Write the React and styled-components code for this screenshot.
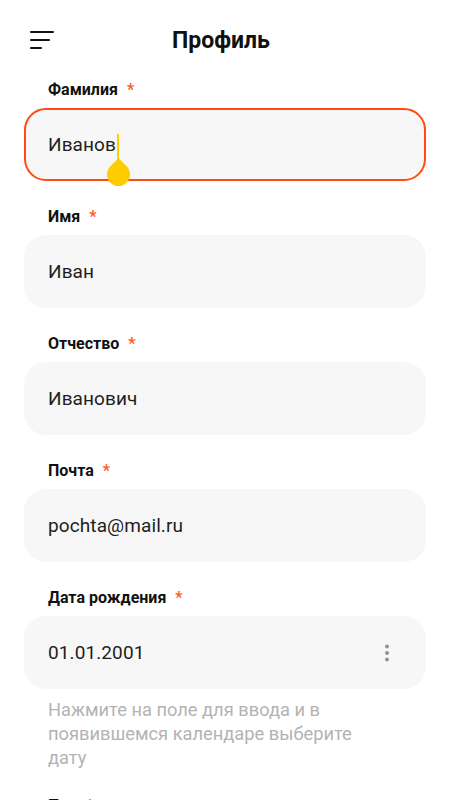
import React from 'react';
import styled, { createGlobalStyle } from 'styled-components';

const GlobalStyle = createGlobalStyle`
  html, body {
    margin: 0;
    padding: 0;
    background: #ffffff;
    font-family: Roboto, "Noto Sans", Arial, sans-serif;
    overflow: hidden;
  }
`;

const Screen = styled.div`
  width: 450px;
  height: 800px;
  overflow: hidden;
  background: #ffffff;
  box-sizing: border-box;
  padding: 0 24px;
`;

const Header = styled.header`
  height: 80px;
  display: grid;
  grid-template-columns: 1fr auto 1fr;
  align-items: center;
`;

const MenuButton = styled.button`
  justify-self: start;
  width: 32px;
  height: 32px;
  padding: 0;
  margin-left: 6px;
  border: none;
  background: none;
  display: flex;
  flex-direction: column;
  justify-content: center;
  gap: 6px;
`;

const MenuLine = styled.span`
  display: block;
  height: 2px;
  width: ${p => p.$w}px;
  background: #111;
  border-radius: 1px;
`;

const Title = styled.h1`
  margin: 0 8px 0 0;
  font-size: 23px;
  font-weight: 700;
  color: #111;
`;

const Group = styled.div`
  display: flex;
  flex-direction: column;
  margin-bottom: 26px;
`;

const Label = styled.label`
  height: 20px;
  line-height: 20px;
  padding-left: 24px;
  margin-bottom: 8px;
  font-size: 16px;
  font-weight: 700;
  color: #111;
`;

const Required = styled.span`
  color: #ff5a1f;
  margin-left: 9px;
`;

const Field = styled.div`
  position: relative;
  height: 73px;
  box-sizing: border-box;
  border-radius: 22px;
  background: #f7f7f7;
  border: 2px solid ${p => (p.$active ? '#ff4a14' : 'transparent')};
  display: flex;
  align-items: center;
  justify-content: space-between;
  padding: 0 34px 0 22px;
  font-size: 19px;
  color: #1e1e1e;
`;

const Value = styled.span`
  position: relative;
  letter-spacing: 0.1px;
`;

const Caret = styled.span`
  position: absolute;
  right: -3px;
  top: 1px;
  width: 2px;
  height: 30px;
  background: #ffcc00;
`;

const Handle = styled.span`
  position: absolute;
  right: -13.5px;
  top: 30px;
  width: 23px;
  height: 23px;
  background: #ffcc00;
  border-radius: 0 50% 50% 50%;
  transform: rotate(45deg);
`;

const Hint = styled.p`
  margin: 9px 0 0;
  padding: 0 24px;
  max-width: 330px;
  font-size: 18.3px;
  line-height: 24px;
  color: #b3b3b3;
`;

const DotsIcon = () => (
  <svg width="6" height="18" viewBox="0 0 6 18">
    <circle cx="3" cy="2.5" r="2" fill="#939393" />
    <circle cx="3" cy="9" r="2" fill="#939393" />
    <circle cx="3" cy="15.5" r="2" fill="#939393" />
  </svg>
);

const fields = [
  { label: 'Фамилия', value: 'Иванов', active: true },
  { label: 'Имя', value: 'Иван' },
  { label: 'Отчество', value: 'Иванович' },
  { label: 'Почта', value: 'pochta@mail.ru' },
];

const App = () => (
  <>
    <GlobalStyle />
    <Screen>
      <Header>
        <MenuButton aria-label="Меню">
          <MenuLine $w={24} />
          <MenuLine $w={20} />
          <MenuLine $w={12} />
        </MenuButton>
        <Title>Профиль</Title>
        <span />
      </Header>

      {fields.map(f => (
        <Group key={f.label}>
          <Label>
            {f.label}
            <Required>*</Required>
          </Label>
          <Field $active={f.active}>
            <Value>
              {f.value}
              {f.active && (
                <>
                  <Caret />
                  <Handle />
                </>
              )}
            </Value>
          </Field>
        </Group>
      ))}

      <Group>
        <Label>
          Дата рождения
          <Required>*</Required>
        </Label>
        <Field>
          <Value>01.01.2001</Value>
          <DotsIcon />
        </Field>
        <Hint>Нажмите на поле для ввода и в появившемся календаре выберите дату</Hint>
      </Group>

      <Group>
        <Label>
          Пол
          <Required>*</Required>
        </Label>
      </Group>
    </Screen>
  </>
);

export default App;
